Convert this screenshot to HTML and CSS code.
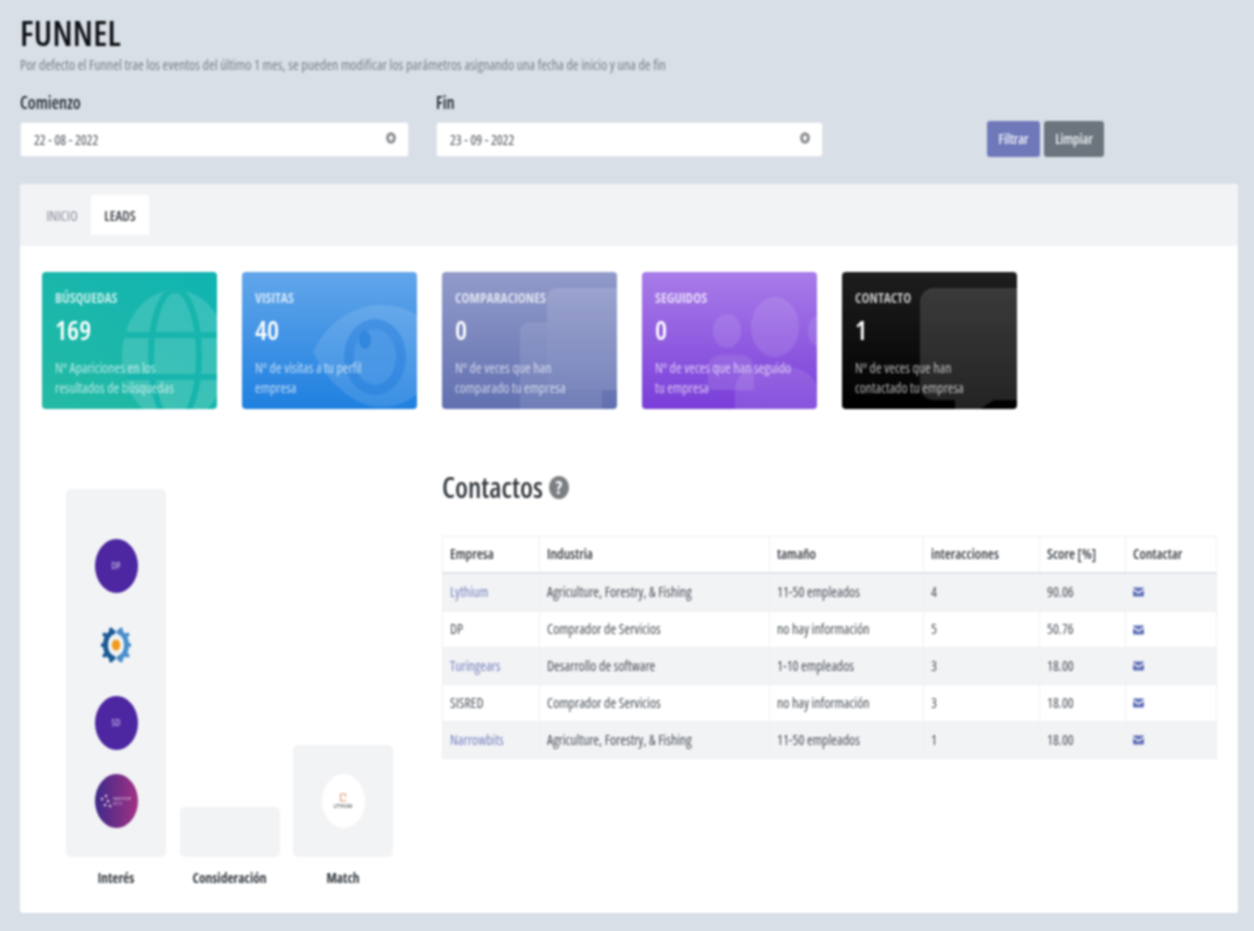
FILE: index.html
```html
<!DOCTYPE html>
<html lang="es">
<head>
<meta charset="utf-8">
<title>Funnel</title>
<link rel="stylesheet" href="styles.css">
</head>
<body>
<div class="page">
  <h1 class="title">FUNNEL</h1>
  <p class="subtitle">Por defecto el Funnel trae los eventos del último 1 mes, se pueden modificar los parámetros asignando una fecha de inicio y una de fin</p>
  <div class="filters">
    <div class="field field-a">
      <label class="field-label">Comienzo</label>
      <div class="input"><span>22 - 08 - 2022</span><svg class="clear" viewBox="0 0 10 12"><ellipse cx="5" cy="6" rx="3.4" ry="4.2" fill="none" stroke="#8a8d90" stroke-width="3"/></svg></div>
    </div>
    <div class="field field-b">
      <label class="field-label">Fin</label>
      <div class="input"><span>23 - 09 - 2022</span><svg class="clear" viewBox="0 0 10 12"><ellipse cx="5" cy="6" rx="3.4" ry="4.2" fill="none" stroke="#8a8d90" stroke-width="3"/></svg></div>
    </div>
    <div class="actions">
      <button class="btn btn-primary">Filtrar</button>
      <button class="btn btn-secondary">Limpiar</button>
    </div>
  </div>

  <section class="card">
    <nav class="tabs">
      <a class="tab">INICIO</a>
      <a class="tab tab-active">LEADS</a>
    </nav>
    <div class="card-body">
      <div class="stats">
        <article class="stat stat-teal">
          <svg class="stat-bg" viewBox="0 0 175 137">
            <defs><clipPath id="globe-clip"><ellipse cx="133" cy="84" rx="53" ry="66"/></clipPath></defs>
            <ellipse cx="133" cy="84" rx="53" ry="66" fill="#fff" fill-opacity=".15"/>
            <g clip-path="url(#globe-clip)" fill="none" stroke="#17b5ad" stroke-width="6">
              <ellipse cx="133" cy="84" rx="24" ry="66"/>
              <path d="M70 63h130M70 105h130"/>
            </g>
          </svg>
          <h3 class="stat-label">BÚSQUEDAS</h3><div class="stat-value">169</div>
          <p class="stat-desc">Nº Apariciones en los resultados de búsquedas</p>
        </article>
        <article class="stat stat-blue">
          <svg class="stat-bg" viewBox="0 0 175 137"><path d="M71 80C84 52 110 33 140 33s52 20 70 47c-18 30-40 55-70 55S84 108 71 80z" fill="#fff" fill-opacity=".12"/><ellipse cx="133" cy="85" rx="31" ry="38" fill="#1d78d8" fill-opacity=".42"/><ellipse cx="133" cy="85" rx="21" ry="28" fill="#5fa6ea" fill-opacity=".45"/><ellipse cx="123" cy="68" rx="6" ry="9" fill="#2c83dc" fill-opacity=".8"/></svg>
          <h3 class="stat-label">VISITAS</h3><div class="stat-value">40</div>
          <p class="stat-desc">Nº de visitas a tu perfil empresa</p>
        </article>
        <article class="stat stat-indigo">
          <svg class="stat-bg" viewBox="0 0 175 137"><rect x="105" y="16" width="90" height="102" rx="9" fill="#fff" fill-opacity=".13"/><path d="M78 60a10 10 0 0 1 10-10h17v68h55v19H78z" fill="#fff" fill-opacity=".1"/></svg>
          <h3 class="stat-label">COMPARACIONES</h3><div class="stat-value">0</div>
          <p class="stat-desc">Nº de veces que han comparado tu empresa</p>
        </article>
        <article class="stat stat-purple">
          <svg class="stat-bg" viewBox="0 0 175 137"><g fill="#fff" fill-opacity=".11"><ellipse cx="133" cy="55" rx="24" ry="30"/><ellipse cx="85" cy="59" rx="14" ry="17"/><ellipse cx="180" cy="59" rx="14" ry="17"/><path d="M66 96c0-8 6-13 14-13h18c8 0 14 5 14 13v22H66z"/><path d="M93 137v-18c0-16 12-23 25-23h30c14 0 27 9 27 23v18z"/></g></svg>
          <h3 class="stat-label">SEGUIDOS</h3><div class="stat-value">0</div>
          <p class="stat-desc">Nº de veces que han seguido tu empresa</p>
        </article>
        <article class="stat stat-black">
          <svg class="stat-bg" viewBox="0 0 175 137"><path d="M78 30a14 14 0 0 1 14-14h90v112h-30l-14 9h-25v-9H92a14 14 0 0 1-14-14z" fill="#fff" fill-opacity=".14"/></svg>
          <h3 class="stat-label">CONTACTO</h3><div class="stat-value">1</div>
          <p class="stat-desc">Nº de veces que han contactado tu empresa</p>
        </article>
      </div>

      <div class="lower">
        <div class="funnel">
          <div class="funnel-col">
            <div class="bar bar-tall">
              <div class="logo logo-initials">DP</div>
              <div class="logo logo-gear">
                <svg viewBox="0 0 30 36" width="30" height="36">
                  <g fill="none" stroke="#1c5a96" stroke-linecap="round">
                    <path d="M12 5C7 7 4.500 12 4.500 18S7 29 12 31" stroke-width="5"/>
                    <path d="M10 2.500v3M3.500 7.500l3 2.500M1.500 18h3M3.500 28.500l3-2.500M10 33.500v-3" stroke-width="4"/>
                  </g>
                  <g fill="none" stroke="#4b8fcc" stroke-linecap="round">
                    <path d="M18 5c5 2 7.500 7 7.500 13S23 29 18 31" stroke-width="5"/>
                    <path d="M20 2.500v3M26.500 7.500l-3 2.500M28.500 18h-3M26.500 28.500l-3-2.500M20 33.500v-3" stroke-width="4"/>
                  </g>
                  <ellipse cx="15" cy="18" rx="4.200" ry="5.500" fill="#f39a1c"/>
                </svg>
              </div>
              <div class="logo logo-initials">SD</div>
              <div class="logo logo-narrow">
                <svg class="narrow-net" viewBox="0 0 12 16" width="12" height="16"><g fill="#e9dcef"><circle cx="2" cy="6" r="1.200"/><circle cx="6" cy="3" r="1.200"/><circle cx="8" cy="8" r="1.200"/><circle cx="10" cy="13" r="1.200"/><circle cx="5" cy="12" r="1.200"/></g></svg>
                <span class="narrow-text">NARROW<br>BITS</span>
              </div>
            </div>
            <div class="bar-label">Interés</div>
          </div>
          <div class="funnel-col">
            <div class="bar bar-short"></div>
            <div class="bar-label">Consideración</div>
          </div>
          <div class="funnel-col">
            <div class="bar bar-mid">
              <div class="logo logo-lythium">
                <svg viewBox="0 0 8 9" width="8" height="9"><path d="M1.500 1h5v3M6.500 7v1h-5V1" fill="none" stroke="#d9905f" stroke-width="1"/></svg>
                <span class="lythium-text">LYTHIUM</span>
              </div>
            </div>
            <div class="bar-label">Match</div>
          </div>
        </div>

        <div class="contacts">
          <h2 class="contacts-title">Contactos <span class="help">?</span></h2>
          <table class="table">
            <thead>
              <tr><th class="c1">Empresa</th><th class="c2">Industria</th><th class="c3">tamaño</th><th class="c4">interacciones</th><th class="c5">Score [%]</th><th class="c6">Contactar</th></tr>
            </thead>
            <tbody>
              <tr class="r1"><td><a class="link">Lythium</a></td><td>Agriculture, Forestry, &amp; Fishing</td><td>11-50 empleados</td><td>4</td><td>90.06</td><td><svg class="mail" viewBox="0 0 11 10"><path d="M0 1.500A1 1 0 0 1 1 .5h9a1 1 0 0 1 1 1L5.500 5zM0 3.200l5.500 3.500L11 3.200V8.500a1 1 0 0 1-1 1H1a1 1 0 0 1-1-1z"/></svg></td></tr>
              <tr class="r2"><td>DP</td><td>Comprador de Servicios</td><td>no hay información</td><td>5</td><td>50.76</td><td><svg class="mail" viewBox="0 0 11 10"><path d="M0 1.500A1 1 0 0 1 1 .5h9a1 1 0 0 1 1 1L5.500 5zM0 3.200l5.500 3.500L11 3.200V8.500a1 1 0 0 1-1 1H1a1 1 0 0 1-1-1z"/></svg></td></tr>
              <tr class="r3"><td><a class="link">Turingears</a></td><td>Desarrollo de software</td><td>1-10 empleados</td><td>3</td><td>18.00</td><td><svg class="mail" viewBox="0 0 11 10"><path d="M0 1.500A1 1 0 0 1 1 .5h9a1 1 0 0 1 1 1L5.500 5zM0 3.200l5.500 3.500L11 3.200V8.500a1 1 0 0 1-1 1H1a1 1 0 0 1-1-1z"/></svg></td></tr>
              <tr class="r4"><td>SISRED</td><td>Comprador de Servicios</td><td>no hay información</td><td>3</td><td>18.00</td><td><svg class="mail" viewBox="0 0 11 10"><path d="M0 1.500A1 1 0 0 1 1 .5h9a1 1 0 0 1 1 1L5.500 5zM0 3.200l5.500 3.500L11 3.200V8.500a1 1 0 0 1-1 1H1a1 1 0 0 1-1-1z"/></svg></td></tr>
              <tr class="r5"><td><a class="link">Narrowbits</a></td><td>Agriculture, Forestry, &amp; Fishing</td><td>11-50 empleados</td><td>1</td><td>18.00</td><td><svg class="mail" viewBox="0 0 11 10"><path d="M0 1.500A1 1 0 0 1 1 .5h9a1 1 0 0 1 1 1L5.500 5zM0 3.200l5.500 3.500L11 3.200V8.500a1 1 0 0 1-1 1H1a1 1 0 0 1-1-1z"/></svg></td></tr>
            </tbody>
          </table>
        </div>
      </div>
    </div>
  </section>
</div>
</body>
</html>
```

FILE: styles.css
```css
* { box-sizing: border-box; }
html, body { margin: 0; height: 100%; }
body {
  background: #d9dfe7;
  font-family: "Open Sans", "Liberation Sans", sans-serif;
  font-stretch: 87%;
  color: #343a40;
  overflow: hidden;
}
.page {
  padding: 16px 16px 0 20px;
  height: 931px;
  filter: blur(.8px);
}
.title {
  margin: 0;
  font-size: 34px;
  line-height: 34px;
  font-weight: 600;
  color: #0f1215;
  letter-spacing: .3px;
}
.subtitle {
  margin: 7px 0 0;
  font-size: 14px;
  line-height: 16px;
  color: #7a818a;
}
.filters {
  display: flex;
  align-items: flex-end;
  margin-top: 20px;
}
.field-a { width: 389px; margin-right: 27px; }
.field-b { width: 387px; margin-right: 164px; }
.field-label {
  display: block;
  font-size: 17px;
  line-height: 20px;
  font-weight: 600;
  color: #22272c;
  margin-bottom: 9px;
}
.input {
  height: 35px;
  background: #fff;
  border: 1px solid #e2e6eb;
  border-radius: 3px;
  padding: 0 12px 0 13px;
  display: flex;
  align-items: center;
  justify-content: space-between;
  font-size: 13.7px;
  color: #495057;
}
.clear { width: 10px; height: 12px; margin-top: -3px; }
.actions { display: flex; gap: 4px; }
.btn {
  height: 36px;
  border: 0;
  border-radius: 3px;
  font: inherit;
  font-stretch: 87%;
  font-size: 13.5px;
  font-weight: 600;
  color: #f1f3f8;
  padding: 0;
}
.btn-primary { width: 53px; background: #6f79ba; }
.btn-secondary { width: 60px; background: #6c757d; }

.card {
  margin-top: 27px;
  width: 1218px;
  height: 729px;
  background: #fff;
  border-radius: 3px;
}
.tabs {
  height: 62px;
  background: #f2f3f5;
  padding: 11px 0 0 13px;
  display: flex;
  align-items: flex-start;
  border-radius: 3px 3px 0 0;
}
.tab {
  width: 58px;
  height: 40px;
  display: flex;
  align-items: center;
  justify-content: center;
  font-size: 14px;
  font-weight: 400;
  color: #858c96;
  border-radius: 2px 2px 0 0;
}
.tab-active { background: #fff; color: #343a40; font-weight: 600; }

.card-body { padding: 26px 21px 0 22px; }
.stats { display: flex; gap: 25px; }
.stat {
  position: relative;
  width: 175px;
  height: 137px;
  padding: 16px 13px 0;
  border-radius: 4px;
  color: #fff;
  overflow: hidden;
}
.stat-bg { position: absolute; inset: 0; width: 100%; height: 100%; }
.stat-label, .stat-value, .stat-desc { position: relative; }
.stat-label {
  margin: 0;
  font-size: 13.5px;
  line-height: 20px;
  font-weight: 700;
  color: rgba(255,255,255,.72);
}
.stat-value {
  margin-top: 6px;
  font-size: 27px;
  line-height: 32px;
  font-weight: 600;
}
.stat-desc {
  margin: 12px 0 0;
  font-size: 13.8px;
  line-height: 20px;
  color: rgba(255,255,255,.68);
  width: 146px;
}
.stat-teal { background: linear-gradient(35deg, #24baa4, #10b4b2); }
.stat-blue { background: linear-gradient(180deg, #62a6ea, #1f80e0); }
.stat-indigo { background: linear-gradient(180deg, #929bca, #6170b0); }
.stat-purple { background: linear-gradient(180deg, #a87ce8, #7a3ed9); }
.stat-black { background: linear-gradient(180deg, #1e1e1e, #000); }

.lower { display: flex; margin-top: 61px; }
.funnel {
  width: 400px;
  padding: 19px 0 0 24px;
  display: flex;
  align-items: flex-end;
  gap: 13.5px;
  height: 418px;
}
.funnel-col { width: 100px; display: flex; flex-direction: column; }
.bar {
  background: #f2f3f5;
  border-radius: 5px;
  display: flex;
  flex-direction: column;
  align-items: center;
  justify-content: flex-end;
  gap: 24.5px;
  padding-bottom: 29px;
}
.bar-tall { height: 368px; }
.bar-short { height: 50px; }
.bar-mid { height: 112px; }
.bar-label {
  margin-top: 11px;
  text-align: center;
  font-size: 13.5px;
  line-height: 20px;
  font-weight: 700;
  color: #343a40;
}
.logo {
  width: 43px;
  height: 54px;
  border-radius: 50%;
  display: flex;
  align-items: center;
  justify-content: center;
  flex: none;
}
.logo-initials { background: #4d27a1; color: #d9cff0; font-size: 9.5px; }
.logo-gear { padding-top: 2px; }
.logo-narrow {
  background: linear-gradient(90deg, #3d2a8a, #a23183);
  position: relative;
  gap: 1px;
}
.narrow-net { flex: none; }
.narrow-text { font-size: 4px; line-height: 5px; letter-spacing: .9px; color: #e9dcef; }
.logo-lythium {
  background: #fff;
  flex-direction: column;
  gap: 1px;
}
.lythium-text { font-size: 5.5px; line-height: 6px; color: #333; letter-spacing: .3px; }

.contacts { width: 775px; }
.contacts-title {
  margin: 0 0 32px;
  font-size: 28px;
  line-height: 34px;
  font-weight: 600;
  color: #343a40;
  display: flex;
  align-items: center;
  gap: 6px;
}
.help {
  width: 20px;
  height: 23px;
  border-radius: 50%;
  background: #7c7f82;
  color: #fff;
  font-size: 18px;
  line-height: 23px;
  font-weight: 700;
  text-align: center;
}
.table {
  width: 775px;
  border-collapse: collapse;
  table-layout: fixed;
  font-size: 13.9px;
  color: #495057;
}
.table th, .table td {
  border: 1px solid #eef0f2;
  padding: 0 7px 2px;
  text-align: left;
  font-weight: 400;
}
.table th { font-weight: 600; color: #343a40; height: 36px; border-bottom: 2px solid #dfe3e8; }
.c1 { width: 97px; }
.c2 { width: 230px; }
.c3 { width: 154px; }
.c4 { width: 116px; }
.c5 { width: 86px; }
.c6 { width: 91px; }
.r1 td { height: 39px; }
.r2 td { height: 36px; }
.r3 td, .r4 td, .r5 td { height: 37px; }
.r1, .r3, .r5 { background: #f2f3f5; }
.link { color: #7883c0; }
.mail { display: block; width: 11px; height: 10px; margin-top: 2px; fill: #5f70b8; }
```
